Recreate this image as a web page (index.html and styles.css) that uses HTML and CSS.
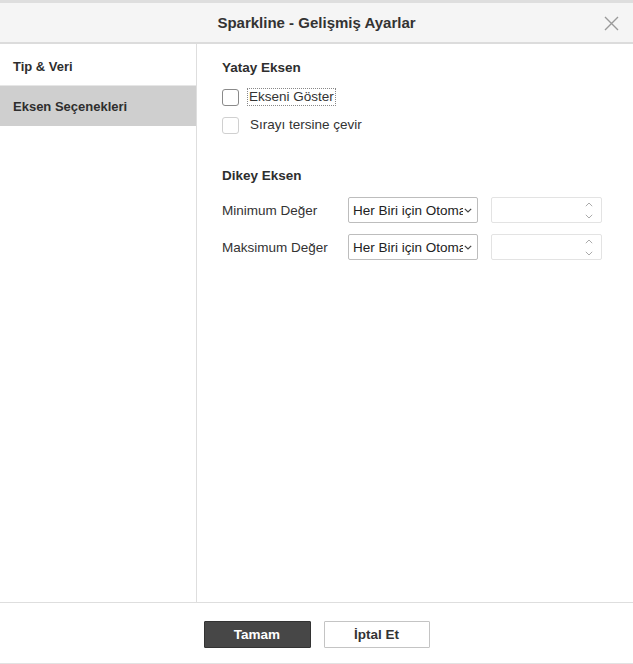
FILE: index.html
```html
<!DOCTYPE html>
<html lang="tr">
<head>
<meta charset="utf-8">
<title>Sparkline - Gelişmiş Ayarlar</title>
<link rel="stylesheet" href="styles.css">
</head>
<body>
<div class="topstrip"></div>
<div class="dialog">
  <header class="header">
    <h1 class="title">Sparkline - Gelişmiş Ayarlar</h1>
    <button class="close" aria-label="Kapat">
      <svg width="15" height="15" viewBox="0 0 15 15"><path d="M1 1 L14 14 M14 1 L1 14" stroke="#9a9a9a" stroke-width="1.4" fill="none"/></svg>
    </button>
  </header>
  <div class="main">
    <nav class="sidebar">
      <div class="nav-item first">Tip &amp; Veri</div>
      <div class="nav-item active">Eksen Seçenekleri</div>
    </nav>
    <section class="content">
      <h2 class="section-title">Yatay Eksen</h2>
      <div class="check-row">
        <span class="checkbox dark"></span>
        <span class="check-label focused">Ekseni Göster</span>
      </div>
      <div class="check-row second">
        <span class="checkbox"></span>
        <span class="check-label">Sırayı tersine çevir</span>
      </div>

      <h2 class="section-title vertical">Dikey Eksen</h2>
      <div class="form-row">
        <span class="form-label">Minimum Değer</span>
        <div class="select">
          <span class="select-text">Her Biri için Otomatik</span>
          <svg class="chev" width="8" height="5" viewBox="0 0 8 5"><path d="M0.8 0.8 L4 4 L7.2 0.8" stroke="#444" stroke-width="1.2" fill="none"/></svg>
        </div>
        <div class="number">
          <div class="spin">
            <svg width="8" height="5" viewBox="0 0 8 5"><path d="M0.8 4.2 L4 1 L7.2 4.2" stroke="#aaa" stroke-width="1" fill="none"/></svg>
            <svg width="8" height="5" viewBox="0 0 8 5"><path d="M0.8 0.8 L4 4 L7.2 0.8" stroke="#aaa" stroke-width="1" fill="none"/></svg>
          </div>
        </div>
      </div>
      <div class="form-row second">
        <span class="form-label">Maksimum Değer</span>
        <div class="select">
          <span class="select-text">Her Biri için Otomatik</span>
          <svg class="chev" width="8" height="5" viewBox="0 0 8 5"><path d="M0.8 0.8 L4 4 L7.2 0.8" stroke="#444" stroke-width="1.2" fill="none"/></svg>
        </div>
        <div class="number">
          <div class="spin">
            <svg width="8" height="5" viewBox="0 0 8 5"><path d="M0.8 4.2 L4 1 L7.2 4.2" stroke="#aaa" stroke-width="1" fill="none"/></svg>
            <svg width="8" height="5" viewBox="0 0 8 5"><path d="M0.8 0.8 L4 4 L7.2 0.8" stroke="#aaa" stroke-width="1" fill="none"/></svg>
          </div>
        </div>
      </div>
    </section>
  </div>
  <footer class="footer">
    <button class="btn primary">Tamam</button>
    <button class="btn secondary">İptal Et</button>
  </footer>
</div>
</body>
</html>
```

FILE: styles.css
```css
* { box-sizing: border-box; }
html, body { margin: 0; padding: 0; background: #fff; }
body {
  width: 633px;
  height: 664px;
  overflow: hidden;
  font-family: "Liberation Sans", Arial, sans-serif;
  color: #333;
}
.topstrip {
  height: 3px;
  background: #dedede;
}
.dialog {
  display: flex;
  flex-direction: column;
  height: 661px;
  border-bottom: 1px solid #e2e2e2;
}
.header {
  height: 41px;
  background: #f5f5f5;
  border-bottom: 2px solid #dcdcdc;
  display: flex;
  align-items: center;
  justify-content: center;
  position: relative;
}
.title {
  margin: 0;
  font-size: 15px;
  font-weight: bold;
  color: #333;
}
.close {
  position: absolute;
  right: 13px;
  top: 12px;
  width: 17px;
  height: 17px;
  padding: 1px;
  border: 0;
  background: transparent;
  display: flex;
  align-items: center;
  justify-content: center;
}
.main {
  display: flex;
  height: 559px;
  border-bottom: 1px solid #dedede;
}
.sidebar {
  width: 197px;
  border-right: 1px solid #dedede;
  display: flex;
  flex-direction: column;
}
.nav-item {
  height: 40px;
  display: flex;
  align-items: center;
  padding-left: 13px;
  font-size: 13px;
  font-weight: bold;
  color: #2e2e2e;
}
.nav-item.first {
  height: 42px;
  padding-top: 4px;
  border-bottom: 1px solid #e6e6e6;
}
.nav-item.active {
  background: #cfcfcf;
}
.content {
  flex: 1;
  padding: 16px 0 0 25px;
  font-size: 13.5px;
}
.section-title {
  margin: 0;
  height: 16px;
  line-height: 16px;
  font-size: 13.5px;
  font-weight: bold;
  color: #2e2e2e;
}
.section-title.vertical {
  margin-top: 34px;
}
.check-row {
  display: flex;
  align-items: center;
  height: 18px;
  margin-top: 12px;
}
.check-row.second {
  margin-top: 10px;
}
.checkbox {
  width: 17px;
  height: 17px;
  border: 1px solid #d0d0d0;
  border-radius: 3px;
  background: #fff;
  flex: none;
}
.checkbox.dark {
  border: 1.5px solid #8a8a8a;
}
.check-label {
  margin-left: 10px;
  color: #333;
  line-height: 16px;
  padding: 0 1px;
}
.check-label.focused {
  outline: 1px dotted #888;
  margin-left: 9px;
}
.form-row {
  display: flex;
  align-items: center;
  height: 26px;
  margin-top: 13px;
}
.form-row.second {
  margin-top: 11px;
}
.form-label {
  width: 126px;
  flex: none;
  color: #333;
}
.select {
  width: 130px;
  height: 26px;
  border: 1px solid #bdbdbd;
  border-radius: 2px;
  display: flex;
  align-items: center;
  padding: 0 5px 0 4px;
  background: #fff;
  flex: none;
}
.select-text {
  flex: 1;
  white-space: nowrap;
  overflow: hidden;
  font-size: 13.5px;
  color: #222;
}
.chev {
  flex: none;
  margin-left: 1px;
}
.number {
  width: 111px;
  height: 26px;
  margin-left: 13px;
  border: 1px solid #e3e3e3;
  border-radius: 2px;
  display: flex;
  justify-content: flex-end;
  align-items: center;
  padding-right: 8px;
  flex: none;
}
.spin {
  display: flex;
  flex-direction: column;
  gap: 7px;
}
.spin svg { display: block; }
.footer {
  flex: 1;
  display: flex;
  justify-content: center;
  align-items: flex-start;
  padding-top: 18px;
  gap: 13px;
}
.btn {
  height: 27px;
  font-family: "Liberation Sans", Arial, sans-serif;
  font-size: 13.5px;
  font-weight: bold;
  border-radius: 1px;
  padding: 0;
}
.btn.primary {
  width: 107px;
  background: #474747;
  color: #fff;
  border: 1px solid #333;
}
.btn.secondary {
  width: 106px;
  background: #fff;
  color: #333;
  border: 1px solid #c4c4c4;
}
```
